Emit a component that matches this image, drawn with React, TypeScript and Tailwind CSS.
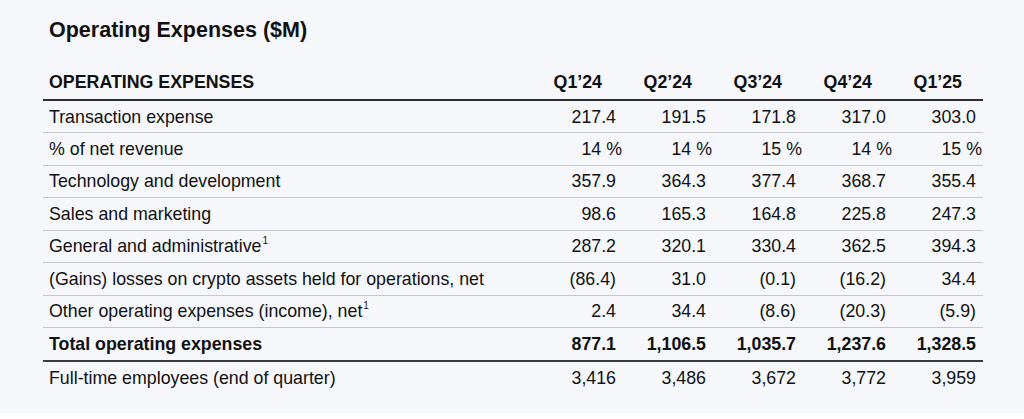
import React from 'react'

// Operating expenses summary table, quarterly ($M)

type Row = {
  label: string
  sup?: boolean
  values: string[]
  pct?: boolean
  bold?: boolean
  dark?: boolean
}

const QUARTERS = ['Q1’24', 'Q2’24', 'Q3’24', 'Q4’24', 'Q1’25']

const ROWS: Row[] = [
  { label: 'Transaction expense', values: ['217.4', '191.5', '171.8', '317.0', '303.0'] },
  { label: '% of net revenue', values: ['14 %', '14 %', '15 %', '14 %', '15 %'], pct: true },
  { label: 'Technology and development', values: ['357.9', '364.3', '377.4', '368.7', '355.4'] },
  { label: 'Sales and marketing', values: ['98.6', '165.3', '164.8', '225.8', '247.3'] },
  { label: 'General and administrative', sup: true, values: ['287.2', '320.1', '330.4', '362.5', '394.3'] },
  { label: '(Gains) losses on crypto assets held for operations, net', values: ['(86.4)', '31.0', '(0.1)', '(16.2)', '34.4'] },
  { label: 'Other operating expenses (income), net', sup: true, values: ['2.4', '34.4', '(8.6)', '(20.3)', '(5.9)'] },
  { label: 'Total operating expenses', values: ['877.1', '1,106.5', '1,035.7', '1,237.6', '1,328.5'], bold: true, dark: true },
  { label: 'Full-time employees (end of quarter)', values: ['3,416', '3,486', '3,672', '3,772', '3,959'] },
]

export default function App() {
  return (
    <div className="w-[1024px] h-[413px] bg-[#f6f7fb] px-[43px] pt-[18px] font-['Liberation_Sans',Arial,sans-serif] text-[#111]">
      <h1 className="pl-[6px] text-[21.5px] leading-[25px] font-bold">Operating Expenses ($M)</h1>

      <table className="mt-[23px] w-[940px] table-fixed border-collapse text-[17.8px]">
        <colgroup>
          <col className="w-[490px]" />
          {QUARTERS.map(q => <col key={q} className="w-[90px]" />)}
        </colgroup>
        <thead>
          <tr className="h-[34px] border-b-2 border-[#2e2e30]">
            <th className="pl-[6px] text-left font-bold leading-none align-middle">OPERATING EXPENSES</th>
            {QUARTERS.map(q => (
              <th key={q} className="pr-[21px] text-right font-bold leading-none align-middle">{q}</th>
            ))}
          </tr>
        </thead>
        <tbody>
          {ROWS.map((r, i) => {
            const last = i === ROWS.length - 1
            return (
              <tr
                key={r.label}
                className={
                  last
                    ? 'h-[33px]'
                    : r.dark
                      ? 'h-[33.5px] border-b-2 border-[#3a3a3c]'
                      : 'h-[32.5px] border-b border-[#c6c6cb]'
                }
              >
                <td className={`pl-[6px] pt-[2px] leading-none align-middle whitespace-nowrap ${r.bold ? 'font-bold' : ''}`}>
                  {r.label}
                  {r.sup && <sup className="text-[10px] ml-[1px] -top-[0.8em]">1</sup>}
                </td>
                {r.values.map((v, j) => (
                  <td
                    key={j}
                    className={`text-right pt-[2px] leading-none align-middle whitespace-nowrap ${r.pct ? 'pr-[1px]' : 'pr-[7px]'} ${r.bold ? 'font-bold' : ''}`}
                  >
                    {v}
                  </td>
                ))}
              </tr>
            )
          })}
        </tbody>
      </table>
    </div>
  )
}
